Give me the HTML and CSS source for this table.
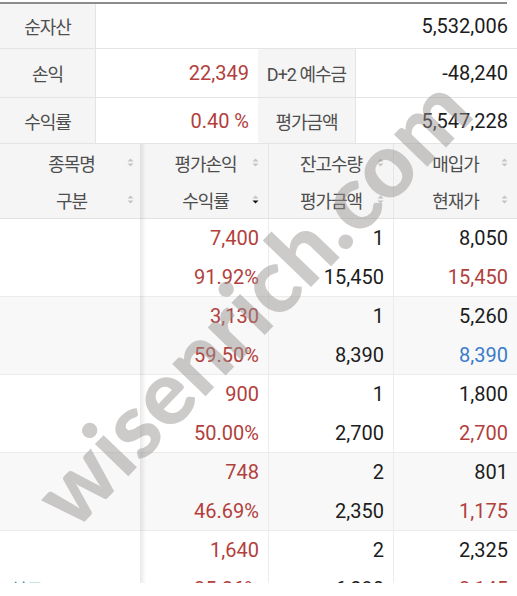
FILE: index.html
```html
<!DOCTYPE html>
<html lang="ko">
<head>
<meta charset="utf-8">
<link rel="stylesheet" href="styles.css">
</head>
<body>
<div class="screen">
  <div class="topline"></div>
  <div class="summary">
    <div class="lab h1">순자산</div><div class="val h1 span3">5,532,006</div>
    <div class="lab h2">손익</div><div class="val h2 red">22,349</div><div class="lab h2">D+2 예수금</div><div class="val h2">-48,240</div>
    <div class="lab h3">수익률</div><div class="val h3 red">0.40 %</div><div class="lab h3">평가금액</div><div class="val h3">5,547,228</div>
  </div>
  <div class="table">
    <div class="row head">
      <div class="cell c1"><div class="hl">종목명<svg class="sort" viewBox="0 0 7 10"><polygon points="0.5,4 3.5,1 6.5,4"/><polygon points="0.5,6 3.5,9 6.5,6"/></svg></div><div class="hl">구분<svg class="sort" viewBox="0 0 7 10"><polygon points="0.5,4 3.5,1 6.5,4"/><polygon points="0.5,6 3.5,9 6.5,6"/></svg></div></div>
      <div class="cell"><div class="hl">평가손익<svg class="sort" viewBox="0 0 7 10"><polygon points="0.5,4 3.5,1 6.5,4"/><polygon points="0.5,6 3.5,9 6.5,6"/></svg></div><div class="hl">수익률<svg class="sort" viewBox="0 0 7 10"><polygon points="0.5,4 3.5,1 6.5,4"/><polygon class="on" points="0.5,6 3.5,9 6.5,6"/></svg></div></div>
      <div class="cell bl"><div class="hl">잔고수량<svg class="sort" viewBox="0 0 7 10"><polygon points="0.5,4 3.5,1 6.5,4"/><polygon points="0.5,6 3.5,9 6.5,6"/></svg></div><div class="hl">평가금액<svg class="sort" viewBox="0 0 7 10"><polygon points="0.5,4 3.5,1 6.5,4"/><polygon points="0.5,6 3.5,9 6.5,6"/></svg></div></div>
      <div class="cell bl"><div class="hl">매입가<svg class="sort" viewBox="0 0 7 10"><polygon points="0.5,4 3.5,1 6.5,4"/><polygon points="0.5,6 3.5,9 6.5,6"/></svg></div><div class="hl">현재가<svg class="sort" viewBox="0 0 7 10"><polygon points="0.5,4 3.5,1 6.5,4"/><polygon points="0.5,6 3.5,9 6.5,6"/></svg></div></div>
    </div>
    <div class="row">
      <div class="cell c1"><div class="ln"></div><div class="ln"></div></div>
      <div class="cell"><div class="ln red">7,400</div><div class="ln red">91.92%</div></div>
      <div class="cell bl"><div class="ln">1</div><div class="ln">15,450</div></div>
      <div class="cell bl"><div class="ln">8,050</div><div class="ln red">15,450</div></div>
    </div>
    <div class="row alt">
      <div class="cell c1"><div class="ln"></div><div class="ln"></div></div>
      <div class="cell"><div class="ln red">3,130</div><div class="ln red">59.50%</div></div>
      <div class="cell bl"><div class="ln">1</div><div class="ln">8,390</div></div>
      <div class="cell bl"><div class="ln">5,260</div><div class="ln blue">8,390</div></div>
    </div>
    <div class="row">
      <div class="cell c1"><div class="ln"></div><div class="ln"></div></div>
      <div class="cell"><div class="ln red">900</div><div class="ln red">50.00%</div></div>
      <div class="cell bl"><div class="ln">1</div><div class="ln">2,700</div></div>
      <div class="cell bl"><div class="ln">1,800</div><div class="ln red">2,700</div></div>
    </div>
    <div class="row alt">
      <div class="cell c1"><div class="ln"></div><div class="ln"></div></div>
      <div class="cell"><div class="ln red">748</div><div class="ln red">46.69%</div></div>
      <div class="cell bl"><div class="ln">2</div><div class="ln">2,350</div></div>
      <div class="cell bl"><div class="ln">801</div><div class="ln red">1,175</div></div>
    </div>
    <div class="row">
      <div class="cell c1"><div class="ln"></div><div class="ln kind">현금</div></div>
      <div class="cell"><div class="ln red">1,640</div><div class="ln red">35.26%</div></div>
      <div class="cell bl"><div class="ln">2</div><div class="ln">6,290</div></div>
      <div class="cell bl"><div class="ln">2,325</div><div class="ln red">3,145</div></div>
    </div>
  </div>
  <div class="watermark">wisenrich.com</div>
</div>
</body>
</html>
```

FILE: styles.css
```css
* { box-sizing: border-box; }
html, body { margin: 0; padding: 0; background: #fff; }
body {
  font-family: Roboto, "Noto Sans CJK KR", sans-serif;
  color: #1c1c1c;
}
.screen {
  position: relative;
  width: 517px;
  height: 583px;
  overflow: hidden;
  padding-top: 2px;
}
.topline {
  width: 507px;
  height: 2px;
  background: #8c8c8c;
}
.summary {
  display: grid;
  grid-template-columns: 96px 162px 98px 161px;
}
.h1 { height: 45px; }
.h2 { height: 49px; }
.h3 { height: 46px; }
.span3 { grid-column: span 3; }
.lab {
  display: flex;
  align-items: center;
  justify-content: center;
  background: #f5f5f5;
  border-right: 1px solid #e4e4e4;
  border-bottom: 1px solid #e4e4e4;
  font-size: 18px;
  letter-spacing: -1px;
  color: #4e4e4e;
}
.val {
  display: flex;
  align-items: center;
  justify-content: flex-end;
  padding-right: 9px;
  border-bottom: 1px solid #e4e4e4;
  font-size: 20px;
}
.red { color: #b2403c; }
.blue { color: #3b7ccb; }
.table {
  position: relative;
}
.table::after {
  content: "";
  position: absolute;
  top: 0;
  bottom: 0;
  left: 140px;
  width: 6px;
  background: linear-gradient(to right, rgba(0,0,0,0.09), rgba(0,0,0,0));
}
.row {
  display: grid;
  grid-template-columns: 143px 125px 125px 124px;
  border-bottom: 1px solid #ececec;
}
.row.alt { background: #f8f8f8; }
.row.head {
  background: #f5f5f5;
  border-bottom: 1px solid #e2e2e2;
}
.cell { display: flex; flex-direction: column; }
.bl { border-left: 1px solid #ececec; }
.head .bl { border-left-color: #e6e6e6; }
.hl {
  position: relative;
  height: 37px;
  display: flex;
  align-items: center;
  justify-content: center;
  font-size: 18px;
  letter-spacing: -1px;
  color: #4e4e4e;
}
.sort {
  position: absolute;
  right: 9px;
  top: 13px;
  width: 7px;
  height: 11px;
  fill: #c4c4c4;
}
.sort .on { fill: #111; }
.ln {
  height: 38.5px;
  display: flex;
  align-items: center;
  justify-content: flex-end;
  padding-right: 9px;
  font-size: 20px;
}
.ln.kind {
  justify-content: flex-start;
  padding-left: 10px;
  font-size: 18px;
  color: #1a9e8e;
}
.watermark {
  position: absolute;
  left: 250px;
  top: 300px;
  transform: translate(-50%, -50%) rotate(-46deg);
  white-space: nowrap;
  font-family: Lato, sans-serif;
  font-weight: 900;
  font-size: 90px;
  line-height: 1;
  color: rgba(150, 145, 145, 0.48);
  pointer-events: none;
}
```
